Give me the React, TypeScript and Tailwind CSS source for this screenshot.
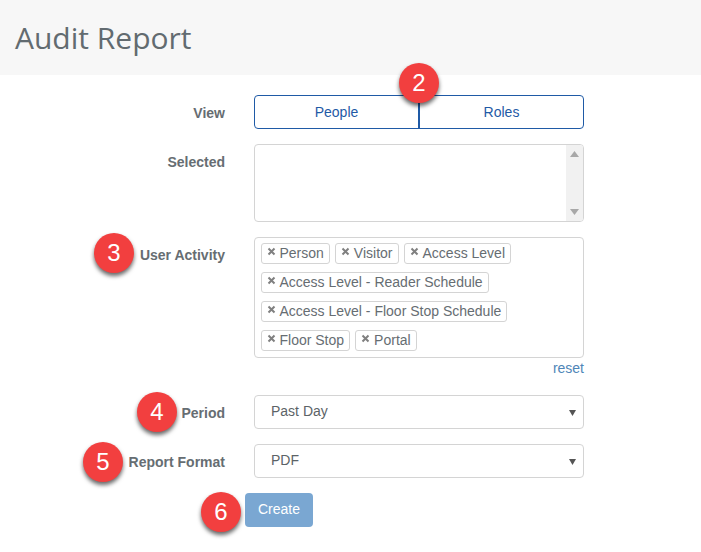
const chipRows = [
  ["Person", "Visitor", "Access Level"],
  ["Access Level - Reader Schedule"],
  ["Access Level - Floor Stop Schedule"],
  ["Floor Stop", "Portal"],
];

function Label({ children, className = "" }: { children: React.ReactNode; className?: string }) {
  return (
    <div className={`w-[225px] shrink-0 text-right text-[14px] font-bold leading-5 text-[#666d72] ${className}`}>
      {children}
    </div>
  );
}

function Badge({ n, className }: { n: number; className: string }) {
  return (
    <div
      className={`absolute flex h-10 w-10 items-center justify-center rounded-full bg-[#f23f3f] text-[24px] leading-none text-white shadow-[0_3px_4px_rgba(0,0,0,0.6)] ${className}`}
    >
      {n}
    </div>
  );
}

function Chip({ text }: { text: string }) {
  return (
    <span className="flex h-[21px] items-center rounded-[3px] border border-[#d4d4d4] pl-[5px] pr-[5px] text-[14px] leading-none text-[#666d72]">
      <svg width="9" height="9" viewBox="0 0 9 9" className="mr-1 mb-[3px]">
        <path d="M1.5 1.5l6 6M7.5 1.5l-6 6" stroke="#808080" strokeWidth="2" />
      </svg>
      {text}
    </span>
  );
}

function SelectBox({ value }: { value: string }) {
  return (
    <div className="flex h-[34px] w-[330px] items-center justify-between rounded-[4px] border-[1.5px] border-[#d4d4d4] pl-[16px] pr-[6px] text-[14px] text-[#5c6367]">
      <span className="mb-px">{value}</span>
      <svg width="7" height="7" viewBox="0 0 7 7" className="mr-px">
        <path d="M0 1h7L3.5 7z" fill="#555" />
      </svg>
    </div>
  );
}

export default function App() {
  return (
    <div className="relative h-[552px] w-[701px] overflow-hidden bg-white font-['Liberation_Sans',sans-serif]">
      <div className="flex h-[75px] items-center bg-[#f7f7f7] pl-[15px]">
        <h1 className="font-['Open_Sans',sans-serif] text-[30px] font-normal leading-none text-[#626b70]">
          Audit Report
        </h1>
      </div>

      <div className="flex flex-col gap-[15px] pt-5">
        <div className="flex items-center gap-[29px]">
          <Label className="pt-[2px]">View</Label>
          <div className="flex h-[34px] w-[330px] rounded-[4px] border-[1.5px] border-[#1f5aa6] text-[14px] text-[#1f5aa6]">
            <div className="flex flex-1 items-center justify-center border-r-[2px] border-[#1f5aa6]">People</div>
            <div className="flex flex-1 items-center justify-center">Roles</div>
          </div>
        </div>

        <div className="flex gap-[29px]">
          <Label className="pt-2">Selected</Label>
          <div className="flex h-[78px] w-[330px] justify-end overflow-hidden rounded-[4px] border-[1.5px] border-[#d4d4d4]">
            <div className="flex w-[17px] flex-col items-center justify-between bg-[#f1f1f1] py-[6px]">
              <svg width="9" height="6" viewBox="0 0 9 6">
                <path d="M4.5 0L9 6H0z" fill="#a8a8a8" />
              </svg>
              <svg width="9" height="6" viewBox="0 0 9 6">
                <path d="M0 0h9L4.5 6z" fill="#a8a8a8" />
              </svg>
            </div>
          </div>
        </div>

        <div>
          <div className="flex gap-[29px]">
            <Label className="pt-2">User Activity</Label>
            <div className="flex h-[121px] w-[330px] flex-col gap-2 rounded-[4px] border-[1.5px] border-[#d4d4d4] pl-[5.5px] pt-[4.5px]">
              {chipRows.map((row) => (
                <div key={row[0]} className="flex gap-[5px]">
                  {row.map((text) => (
                    <Chip key={text} text={text} />
                  ))}
                </div>
              ))}
            </div>
          </div>
          <div className="flex h-5 w-[584px] items-center justify-end text-[14px] text-[#4f86b8]">reset</div>
          <div className="h-[17px]" />
          <div className="flex items-center gap-[29px]">
            <Label className="pt-[2px]">Period</Label>
            <SelectBox value="Past Day" />
          </div>
        </div>

        <div className="flex items-center gap-[29px]">
          <Label className="pt-[2px]">Report Format</Label>
          <SelectBox value="PDF" />
        </div>

        <div className="pl-[245px]">
          <button className="h-[34px] w-[68px] rounded-[4px] bg-[#7aa7d2] pb-px text-[14px] text-white">Create</button>
        </div>
      </div>

      <Badge n={2} className="left-[399px] top-[63px]" />
      <Badge n={3} className="left-[94px] top-[233px]" />
      <Badge n={4} className="left-[137px] top-[392px]" />
      <Badge n={5} className="left-[83px] top-[442px]" />
      <Badge n={6} className="left-[201px] top-[492px]" />
    </div>
  );
}
